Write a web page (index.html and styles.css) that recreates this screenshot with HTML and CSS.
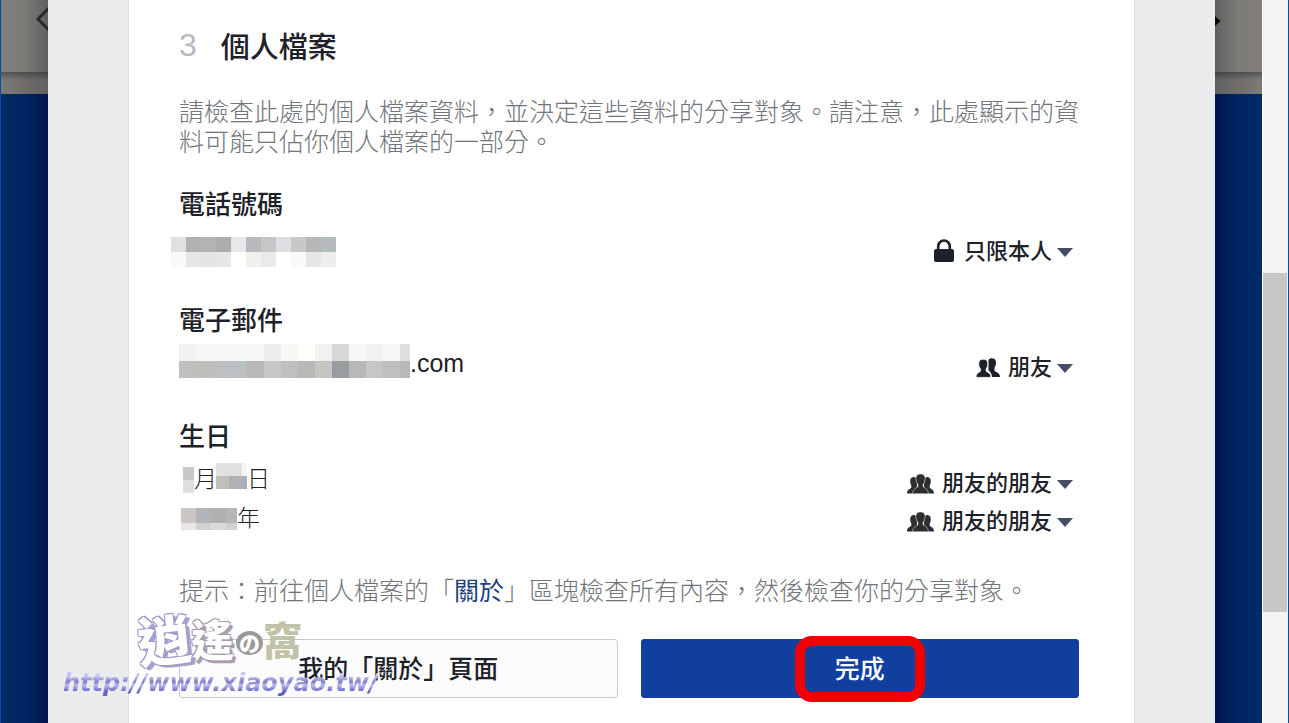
FILE: index.html
```html
<!DOCTYPE html>
<html lang="zh-Hant">
<head>
  <meta charset="UTF-8">
  <meta name="viewport" content="width=device-width, initial-scale=1.0">
  <title>個人檔案</title>
  <link rel="stylesheet" href="styles.css">
</head>
<body>
  <svg class="sprite" aria-hidden="true">
    <symbol id="lock" viewBox="0 0 20 24">
      <path d="M4.200 11V7.500a5.800 6 0 0 1 11.600 0V11" fill="none" stroke="#1d2129" stroke-width="2.600"/>
      <rect x="0" y="10" width="20" height="13" rx="2" fill="#1d2129"/>
    </symbol>
    <symbol id="friends" viewBox="0 0 24 20">
      <path fill="#1d2129" d="M12.500 2C13.500-.3 18.500-.5 19.700 2.700c.6 2 .3 5-1.200 7v2.800c0 1.500 5.500 1.500 5.500 6.500h-8c-.3-4-2-5.300-3.500-6.200z"/>
      <path fill="#1d2129" stroke="#fff" stroke-width=".8" d="M7.200 1.200c3.300 0 4.800 1.800 4.600 5-.1 2-.7 3.600-1.700 4.700v2c0 1.300 4.900 1.300 4.900 6.500H0c0-5.200 4.500-5.200 4.500-6.500v-2c-1-1.100-1.700-2.700-1.800-4.700-.2-3.200 1.300-5 4.500-5z"/>
    </symbol>
    <symbol id="friends-of-friends" viewBox="0 0 27 20">
      <path fill="#2e2e2e" d="M3.200 7c-.2-5 6.300-5 6.600-1.500l.2 7.500-2 6.500H0c0-5 4.300-4.500 4.300-6v-2c-.8-1-1.100-3-1.100-4.500zM23.800 7c.2-5-6.300-5-6.600-1.500L17 13l2 6.500h8c0-5-4.300-4.500-4.300-6v-2c.8-1 1.100-3 1.100-4.500z"/>
      <path fill="#2e2e2e" stroke="#fff" stroke-width=".5" d="M13.500 0c3.400 0 4.900 2 4.600 5.200-.2 2.200-1 4-2 5.300v1.700c0 2 5.200 1.500 5.200 7.600H5.700c0-6.100 5.200-5.600 5.200-7.600v-1.700c-1-1.300-1.800-3.100-2-5.300C8.600 2 10.100 0 13.500 0z"/>
    </symbol>
    <symbol id="caret" viewBox="0 0 16 9">
      <path d="M0 0h16L8 9z" fill="#444d63"/>
    </symbol>
  </svg>

  <div class="page">
    <div class="backdrop backdrop-left">
      <div class="toolbar">
        <svg width="14" height="28" viewBox="0 0 14 28"><path d="M15 3L4 14l11 11" fill="none" stroke="#292929" stroke-width="3"/></svg>
      </div>
      <div class="strip"></div>
      <div class="navy"></div>
    </div>

    <main class="dialog">
      <section class="card">
        <h1 class="title"><span class="step">3</span>個人檔案</h1>
        <p class="text">請檢查此處的個人檔案資料，並決定這些資料的分享對象。請注意，此處顯示的資料可能只佔你個人檔案的一部分。</p>

        <section class="field">
          <h2>電話號碼</h2>
          <div class="field-body">
            <div class="values">
              <div class="value phone">
                <svg width="165" height="30" shape-rendering="crispEdges">
                  <path fill="#e0e0de" d="M0 0h15v15H0z"/><path fill="#b1b1b1" d="M15 0h15v15H15z"/><path fill="#b1b3b5" d="M30 0h15v15H30z"/><path fill="#adadad" d="M45 0h15v15H45z"/><path fill="#e8e8ea" d="M60 0h15v15H60z"/><path fill="#b8babd" d="M75 0h15v15H75z"/><path fill="#c8c6c5" d="M90 0h15v15H90z"/><path fill="#dcdee3" d="M105 0h15v15h-15z"/><path fill="#c8c8c6" d="M120 0h15v15h-15z"/><path fill="#b9b7b5" d="M135 0h15v15h-15z"/><path fill="#b5bcbe" d="M150 0h15v15h-15z"/>
                  <path fill="#faf9f7" d="M0 15h15v15H0zM120 15h15v15h-15z"/><path fill="#e7e7e7" d="M15 15h15v15H15zM45 15h15v15H45z"/><path fill="#e2e5e3" d="M30 15h15v15H30z"/><path fill="#f1f0eb" d="M75 15h15v15H75z"/><path fill="#eaeaea" d="M90 15h15v15H90z"/><path fill="#e7e6e4" d="M135 15h15v15h-15z"/><path fill="#eee" d="M150 15h15v15h-15z"/>
                </svg>
              </div>
            </div>
            <div class="audiences">
              <label class="audience">
                <svg class="lock" width="20" height="24"><use href="#lock"/></svg>
                <select aria-label="電話號碼分享對象"><option>只限本人</option></select>
                <svg width="16" height="9"><use href="#caret"/></svg>
              </label>
            </div>
          </div>
        </section>

        <section class="field">
          <h2>電子郵件</h2>
          <div class="field-body">
            <div class="values">
              <div class="value email">
                <svg width="231" height="34" shape-rendering="crispEdges">
                  <path fill="#f7f7f5" d="M0 0h231v17H0z"/><path fill="#f1f1f1" d="M0 0h17v17H0zM136 0h17v17h-17zM187 0h17v17h-17z"/><path fill="#ececea" d="M85 0h17v17H85z"/><path fill="#fdfdfa" d="M119 0h17v17h-17z"/><path fill="#d8d8d8" d="M153 0h17v17h-17z"/><path fill="#dedede" d="M221 0h10v17h-10z"/>
                  <path fill="#bebfc1" d="M0 17h231v17H0z"/><path fill="#bebebb" d="M17 17h17v17H17z"/><path fill="#bbc0c3" d="M51 17h17v17H51z"/><path fill="#b8b8b8" d="M68 17h17v17H68zM221 17h10v17h-10z"/><path fill="#c6c6c6" d="M85 17h17v17H85zM187 17h17v17h-17z"/><path fill="#b7b9b7" d="M119 17h17v17h-17zM170 17h17v17h-17z"/><path fill="#c7c5c2" d="M136 17h17v17h-17z"/><path fill="#999da0" d="M153 17h17v17h-17z"/>
                </svg>
                <span>.com</span>
              </div>
            </div>
            <div class="audiences">
              <label class="audience">
                <svg width="24" height="20"><use href="#friends"/></svg>
                <select aria-label="電子郵件分享對象"><option>朋友</option></select>
                <svg width="16" height="9"><use href="#caret"/></svg>
              </label>
            </div>
          </div>
        </section>

        <section class="field">
          <h2>生日</h2>
          <div class="field-body">
            <div class="values">
              <div class="value birth">
                <svg width="15" height="26" shape-rendering="crispEdges"><path fill="#c7c8c8" d="M4 0h11v13H4z"/><path fill="#dfdfe1" d="M4 13h11v13H4z"/></svg>
                <span>月</span>
                <svg class="day" width="31" height="26" shape-rendering="crispEdges"><path fill="#e1e0df" d="M0 0h26v13H0z"/><path fill="#f3f6f5" d="M26 0h5v13h-5z"/><path fill="#c1bfbc" d="M0 13h13v13H0z"/><path fill="#b1b2b5" d="M13 13h13v13H13z"/><path fill="#a9b0bd" d="M26 13h5v13h-5z"/></svg>
                <span>日</span>
              </div>
              <div class="value birth">
                <svg width="58" height="22" shape-rendering="crispEdges"><path fill="#cbc5c3" d="M2 0h15v15H2z"/><path fill="#b1b5bb" d="M17 0h15v15H17z"/><path fill="#b0b0b0" d="M32 0h15v15H32z"/><path fill="#b3b7ba" d="M47 0h11v15H47z"/><path fill="#ebe6e6" d="M2 15h15v7H2z"/><path fill="#d3d1cf" d="M17 15h15v7H17z"/><path fill="#dadada" d="M32 15h15v7H32z"/><path fill="#d0d1d4" d="M47 15h11v7H47z"/></svg>
                <span>年</span>
              </div>
            </div>
            <div class="audiences">
              <label class="audience">
                <svg width="27" height="20"><use href="#friends-of-friends"/></svg>
                <select aria-label="生日月日分享對象"><option>朋友的朋友</option></select>
                <svg width="16" height="9"><use href="#caret"/></svg>
              </label>
              <label class="audience">
                <svg width="27" height="20"><use href="#friends-of-friends"/></svg>
                <select aria-label="出生年分享對象"><option>朋友的朋友</option></select>
                <svg width="16" height="9"><use href="#caret"/></svg>
              </label>
            </div>
          </div>
        </section>

        <p class="text hint">提示：前往個人檔案的「<a href="#about">關於</a>」區塊檢查所有內容，然後檢查你的分享對象。</p>

        <div class="actions">
          <button class="button" type="button">我的「關於」頁面</button>
          <button class="button primary" type="button"><span class="label">完成<span class="ring"></span></span></button>
          <div class="watermark">
            <div class="logo">
              <span class="c1">逍</span><span class="c2">遙</span><span class="c3">の</span><span class="c4">窩</span>
            </div>
            <div class="url">http://www.xiaoyao.tw/</div>
          </div>
        </div>
      </section>
    </main>

    <div class="backdrop backdrop-right">
      <div class="toolbar">
        <svg width="6" height="12" viewBox="0 0 6 12"><path d="M0 1l5.500 5L0 11z" fill="#080808"/></svg>
      </div>
      <div class="strip"></div>
      <div class="navy"></div>
    </div>
    <div class="scrollbar"><div class="thumb"></div></div>
  </div>
</body>
</html>
```
FILE: styles.css
```css
* {
  box-sizing: border-box;
}
body {
  margin: 0;
  font-family: "Liberation Sans", "Noto Sans CJK TC", sans-serif;
  color: #1d2129;
}
h1, h2, p {
  margin: 0;
}
svg {
  display: block;
  flex: none;
}
.sprite {
  display: none;
}
.page {
  display: flex;
  height: 100vh;
  overflow: hidden;
}

/* darkened window behind the dialog */
.backdrop {
  display: flex;
  flex-direction: column;
  flex: none;
}
.backdrop-left {
  width: 48px;
  border-left: 1px solid #0050a8;
}
.backdrop-right {
  width: 47px;
}
.toolbar {
  height: 72px;
  display: flex;
  background: linear-gradient(to right, #827f7b, #7d7b78 50%, #62605e);
}
.backdrop-left .toolbar {
  justify-content: flex-end;
  padding-top: 5px;
}
.strip {
  height: 22px;
  background: linear-gradient(rgba(0, 0, 0, .3), transparent 8px), linear-gradient(to right, #7d7a78, #62605e);
}
.navy {
  flex: 1;
  background: linear-gradient(to right, #002a66, #002662 50%, #00164e);
}
.backdrop-right .toolbar {
  padding-top: 15px;
  background: linear-gradient(to left, #827f7b, #7d7b78 50%, #62605e);
}
.backdrop-right .strip {
  background: linear-gradient(rgba(0, 0, 0, .3), transparent 8px), linear-gradient(to left, #7d7a78, #62605e);
}
.backdrop-right .navy {
  background: linear-gradient(to left, #002a66, #002662 50%, #00164e);
}
.scrollbar {
  flex: none;
  width: 27px;
  display: grid;
  grid-template-rows: 273fr 339fr 111fr;
  padding-right: 1px;
  background: #f4f3f1;
  border-left: 1px solid #fff;
  border-right: 1px solid #0050a8;
}
.thumb {
  grid-row: 2;
  background: #c8c7c5;
}

.dialog {
  flex: 1;
  display: flex;
  padding: 0 80px;
  background: #eaebed;
}
.card {
  flex: 1;
  padding: 30px 55px 24px 50px;
  background: #fff;
  border: solid #dadde1;
  border-width: 0 1px;
}
.title {
  display: flex;
  gap: 24px;
  font-size: 29px;
  font-weight: 500;
  line-height: 36px;
}
.step {
  font-size: 32px;
  line-height: 30px;
  font-weight: normal;
  color: #b4b9c2;
}
.text {
  margin-top: 31px;
  font-size: 25px;
  line-height: 30px;
  font-weight: 300;
  color: #70747b;
}
.text a {
  color: #1d3f80;
  font-weight: 400;
  text-decoration: none;
}
.field {
  margin-top: 35px;
}
.text + .field {
  margin-top: 33px;
}
.field h2 {
  font-size: 26px;
  font-weight: 500;
  line-height: 30px;
}
.field-body {
  display: flex;
  justify-content: space-between;
  margin-top: 8px;
}
.value {
  display: flex;
  align-items: center;
  font-size: 25px;
  line-height: 39px;
  font-weight: 300;
}
.phone {
  margin-left: -8px;
  padding-top: 9px;
}
.email {
  align-items: flex-start;
}
.email span {
  font-weight: normal;
}
.birth {
  font-size: 23px;
}
.day {
  margin: 0 0 8px -1px;
}
.audiences {
  padding: 5px 6px 0 0;
}
.audience {
  display: flex;
  align-items: center;
  justify-content: flex-end;
  height: 38px;
}
.audience select {
  appearance: none;
  margin: 0 4px 0 8px;
  padding: 0;
  border: 0;
  background: none;
  color: inherit;
  font: 500 22px/32px "Liberation Sans", "Noto Sans CJK TC", sans-serif;
}
.audience .lock {
  margin: 0 2px 2px 0;
}
.hint {
  margin-top: 35px;
}
.actions {
  position: relative;
  display: grid;
  grid-template-columns: 1fr 1fr;
  gap: 23px;
  margin-top: 33px;
}
.button {
  height: 59px;
  border: 1px solid #c8cacc;
  border-radius: 3px;
  background: #fbfbfc;
  color: #1d2129;
  font: 500 25px/30px "Liberation Sans", "Noto Sans CJK TC", sans-serif;
}
.primary {
  border-color: #103fa0;
  background: #103fa0;
  color: #fff;
}
.label {
  position: relative;
}
.ring {
  position: absolute;
  inset: -19px -40px;
  border: 10px solid #f00000;
  border-radius: 17px;
}

/* site watermark over the first button */
.watermark {
  position: absolute;
  left: -116px;
  top: -33px;
  pointer-events: none;
}
.logo {
  display: flex;
  align-items: center;
  height: 64px;
  padding-left: 74px;
  font-family: "Noto Sans CJK TC", sans-serif;
  font-weight: 900;
  line-height: 60px;
}
.c1, .c2 {
  color: #fff;
}
.c1 {
  font-size: 54px;
  text-shadow: -1px -1px #9a9ac8, 1px -1px #9a9ac8, -1px 1px #9a9ac8, 2px 2px #a3a3cb, 4px 3px #a3a3cb;
  transform: rotate(-6deg);
}
.c2 {
  font-size: 43px;
  text-shadow: -1px -1px #a699ae, 1px -1px #a699ae, -1px 1px #a699ae, 2px 2px #aa9fb0, 3px 3px #aa9fb0;
}
.c3 {
  width: 27px;
  height: 24px;
  margin: 10px 0 0 2px;
  border-radius: 50%;
  background: #999;
  color: #fff;
  font-size: 21px;
  line-height: 22px;
  text-align: center;
}
.c4 {
  font-size: 39px;
  color: #c2c2a8;
}
.url {
  font: italic bold 24px/26px "DejaVu Sans", sans-serif;
  color: transparent;
  background: linear-gradient(#c8c8f6 6px, #7c7cc6 12px, #bcbcf0 15px, #6060c0 22px);
  background-clip: text;
  -webkit-background-clip: text;
}
```
